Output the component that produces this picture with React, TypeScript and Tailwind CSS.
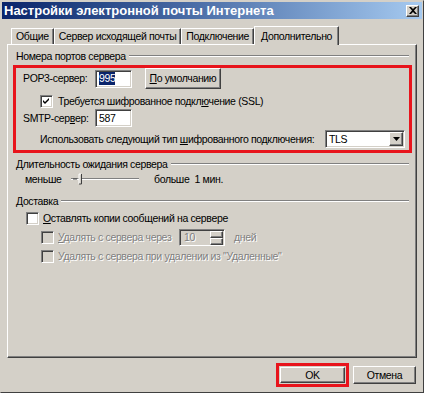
import React from "react";

const raised =
  "border border-t-white border-l-white border-r-[#404040] border-b-[#404040] shadow-[inset_-1px_-1px_0_#808080]";
const sunken =
  "border border-t-[#808080] border-l-[#808080] border-r-white border-b-white shadow-[inset_1px_1px_0_#404040,inset_-1px_-1px_0_#d4d0c8]";

function Group({ label }: { label: string }) {
  return (
    <div className="flex h-[14px] items-center pl-[8px] pr-[7px]">
      <span className="pr-[3px]">{label}</span>
      <div className="h-[2px] flex-1 border-t border-t-[#808080] border-b border-b-white" />
    </div>
  );
}

function Check({ checked, disabled }: { checked?: boolean; disabled?: boolean }) {
  return (
    <div
      className={`flex h-[13px] w-[13px] shrink-0 items-center justify-center ${sunken} ${
        disabled ? "bg-[#d4d0c8]" : "bg-white"
      }`}
    >
      {checked && (
        <svg width="7" height="7" viewBox="0 0 7 7">
          <path d="M0 2 L2 4 L6 0 L6 2 L2 6 L0 4 Z" fill="#000" />
        </svg>
      )}
    </div>
  );
}

function Tab({ label, active }: { label: string; active?: boolean }) {
  if (active) {
    return (
      <div className="relative z-10 -mb-px flex h-[19px] items-center border border-b-0 border-t-white border-l-white border-r-[#404040] bg-[#d4d0c8] px-[6px] shadow-[inset_-1px_0_0_#808080]">
        {label}
      </div>
    );
  }
  return (
    <div className="flex h-[16px] items-center border border-b-0 border-t-white border-l-white border-r-[#404040] px-[4px] shadow-[inset_-1px_0_0_#808080]">
      {label}
    </div>
  );
}

export default function App() {
  return (
    <div
      className="flex h-[393px] w-[424px] flex-col whitespace-nowrap border border-t-[#d4d0c8] border-l-[#d4d0c8] border-r-[#404040] border-b-[#404040] bg-[#d4d0c8] p-px text-[10.5px] leading-[13px] tracking-[-0.35px] text-black"
      style={{ fontFamily: "'Liberation Sans', Arial, sans-serif" }}
    >
      {/* title bar */}
      <div className="flex h-[17px] items-center justify-between bg-gradient-to-r from-[#0a246a] to-[#a6caf0] pl-[2px] pr-[3px]">
        <span className="text-[13px] font-bold tracking-normal text-white">
          Настройки электронной почты Интернета
        </span>
        <div className={`flex h-[12px] w-[13px] items-center justify-center bg-[#d4d0c8] ${raised}`}>
          <svg width="8" height="7" viewBox="0 0 8 7">
            <path d="M0 0 L2 0 L4 2 L6 0 L8 0 L5 3.5 L8 7 L6 7 L4 5 L2 7 L0 7 L3 3.5 Z" fill="#000" />
          </svg>
        </div>
      </div>

      <div className="flex flex-1 flex-col px-[5px] pt-[7px]">
        {/* tabs */}
        <div className="flex items-end pl-[4px]">
          <Tab label="Общие" />
          <Tab label="Сервер исходящей почты" />
          <Tab label="Подключение" />
          <Tab label="Дополнительно" active />
        </div>

        {/* panel */}
        <div className="flex h-[314px] flex-col border border-t-white border-l-white border-r-[#404040] border-b-[#404040] pt-[4px] shadow-[inset_-1px_-1px_0_#808080]">
          <Group label="Номера портов сервера" />

          <div className="ml-[5px] mr-[4px] mt-[2px] flex h-[88px] flex-col border-[3px] border-[#e8141c] pl-[7px]">
            <div className="flex h-[21px] items-center">
              <span className="w-[72px] shrink-0">POP3-сервер:</span>
              <div className={`flex h-[18px] w-[37px] items-center bg-white px-[3px] ${sunken}`}>
                <span className="bg-[#0a246a] text-white">995</span>
              </div>
              <div className={`ml-[13px] flex h-[21px] w-[76px] items-center justify-center ${raised}`}>
                <span>
                  <u>П</u>о умолчанию
                </span>
              </div>
            </div>
            <div className="mt-[4px] flex h-[16px] items-center gap-[5px] pl-[17px]">
              <Check checked />
              <span>
                Требуется шифрованное подкл<u>ю</u>чение (SSL)
              </span>
            </div>
            <div className="flex h-[18px] items-center">
              <span className="w-[72px] shrink-0">
                SMTP-сер<u>в</u>ер:
              </span>
              <div className={`flex h-[18px] w-[37px] items-center bg-white px-[3px] ${sunken}`}>587</div>
            </div>
            <div className="mt-[3px] flex h-[18px] items-center pl-[17px]">
              <span>
                Использовать следующий тип <u>ш</u>ифрованного подключения:
              </span>
              <div className={`ml-auto mr-[4px] flex h-[18px] w-[80px] shrink-0 items-center bg-white pl-[3px] ${sunken}`}>
                <span className="flex-1">TLS</span>
                <div className={`mr-px flex h-[14px] w-[14px] items-center justify-center bg-[#d4d0c8] ${raised}`}>
                  <svg width="7" height="4" viewBox="0 0 7 4">
                    <path d="M0 0 L7 0 L3.5 4 Z" fill="#000" />
                  </svg>
                </div>
              </div>
            </div>
          </div>

          <div className="mt-[4px]">
            <Group label="Длительность ожидания сервера" />
          </div>
          <div className="mt-px flex h-[14px] items-center pl-[17px]">
            <span className="w-[46px] shrink-0">меньше</span>
            <svg width="68" height="14" viewBox="0 0 68 14">
              <line x1="0" y1="6.5" x2="68" y2="6.5" stroke="#808080" />
              <line x1="0" y1="7.5" x2="68" y2="7.5" stroke="#fff" />
              <line x1="2" y1="7" x2="6" y2="7" stroke="#404040" />
              <rect x="8" y="2" width="3" height="10" fill="#d4d0c8" />
              <path d="M8 12 L8 2 L10 2" stroke="#fff" fill="none" />
              <path d="M10.5 2 L10.5 12 L8 12" stroke="#404040" fill="none" />
            </svg>
            <span className="ml-[15px]">больше&nbsp;&nbsp;1 мин.</span>
          </div>

          <div className="mt-[8px]">
            <Group label="Доставка" />
          </div>
          <div className="mt-[3px] flex h-[14px] items-center gap-[4px] pl-[18px]">
            <Check />
            <span>
              <u>О</u>ставлять копии сообщений на сервере
            </span>
          </div>
          <div className="mt-[4px] flex h-[17px] items-center pl-[33px] text-[#808080] [text-shadow:1px_1px_0_#fff]">
            <Check disabled />
            <span className="ml-[4px] w-[121px] shrink-0">
              <u>У</u>далять с сервера через
            </span>
            <div className={`flex h-[17px] w-[46px] items-center bg-[#d4d0c8] pl-[4px] ${sunken}`}>
              <span className="flex-1">10</span>
              <div className="mr-px flex flex-col">
                <div className={`h-[7px] w-[13px] ${raised}`} />
                <div className={`h-[7px] w-[13px] ${raised}`} />
              </div>
            </div>
            <span className="ml-[9px]">дней</span>
          </div>
          <div className="mt-[3px] flex h-[14px] items-center pl-[33px] text-[#808080] [text-shadow:1px_1px_0_#fff]">
            <Check disabled />
            <span className="ml-[4px]">Удалять с сервера при удалении из "Удаленные"</span>
          </div>
        </div>

        {/* buttons */}
        <div className="mt-[5px] flex items-center justify-end gap-[4px] pr-[1px]">
          <div className="border-[3px] border-[#e8141c] p-px">
            <div className={`flex h-[16px] w-[65px] items-center justify-center ${raised}`}>OK</div>
          </div>
          <div className={`flex h-[18px] w-[63px] items-center justify-center ${raised}`}>Отмена</div>
        </div>
      </div>
    </div>
  );
}
